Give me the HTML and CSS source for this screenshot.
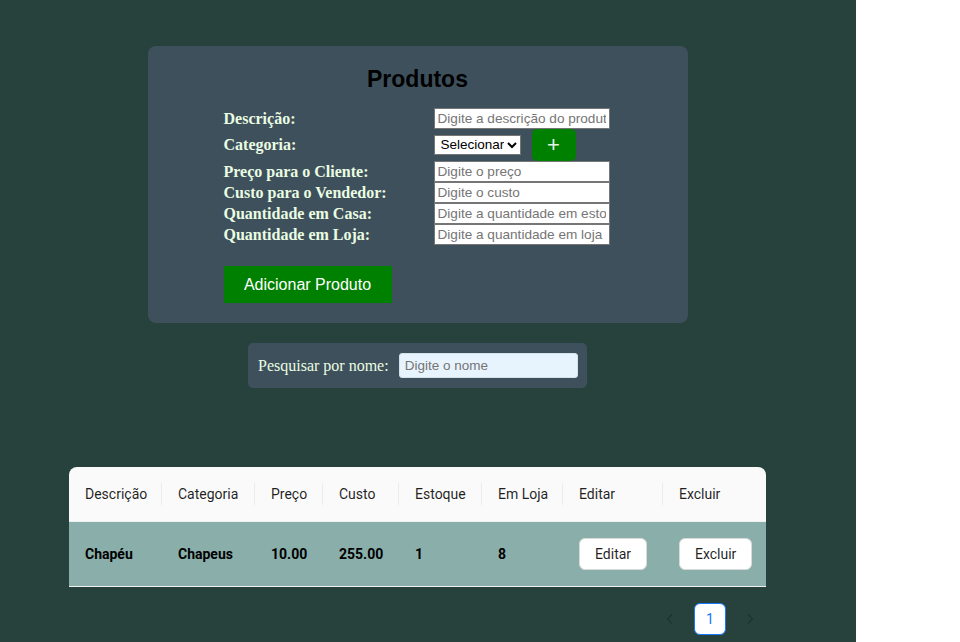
FILE: index.html
```html
<!DOCTYPE html>
<html lang="pt">
<head>
<meta charset="utf-8">
<title>Produtos</title>
<link rel="stylesheet" href="styles.css">
</head>
<body>
<div class="app">
  <div class="column">
    <section class="card">
      <h2 class="title">Produtos</h2>
      <div class="form">
        <label class="lbl">Descrição:</label>
        <div class="field"><input class="inp" type="text" placeholder="Digite a descrição do produto"></div>
        <label class="lbl">Categoria:</label>
        <div class="field field-cat">
          <select class="sel"><option>Selecionar</option></select>
          <button class="plus" type="button">+</button>
        </div>
        <label class="lbl">Preço para o Cliente:</label>
        <div class="field"><input class="inp" type="text" placeholder="Digite o preço"></div>
        <label class="lbl">Custo para o Vendedor:</label>
        <div class="field"><input class="inp" type="text" placeholder="Digite o custo"></div>
        <label class="lbl">Quantidade em Casa:</label>
        <div class="field"><input class="inp" type="text" placeholder="Digite a quantidade em estoque"></div>
        <label class="lbl">Quantidade em Loja:</label>
        <div class="field"><input class="inp" type="text" placeholder="Digite a quantidade em loja"></div>
      </div>
      <div class="actions">
        <button class="add" type="button">Adicionar Produto</button>
      </div>
    </section>

    <div class="search">
      <label class="search-lbl">Pesquisar por nome:</label>
      <input class="search-inp" type="text" placeholder="Digite o nome">
    </div>

    <div class="table-wrap">
      <table class="tbl">
        <colgroup>
          <col class="c1"><col class="c2"><col class="c3"><col class="c4">
          <col class="c5"><col class="c6"><col class="c7"><col class="c8">
        </colgroup>
        <thead>
          <tr>
            <th>Descrição</th>
            <th class="sep">Categoria</th>
            <th class="sep">Preço</th>
            <th class="sep">Custo</th>
            <th class="sep">Estoque</th>
            <th class="sep">Em Loja</th>
            <th class="sep">Editar</th>
            <th class="sep">Excluir</th>
          </tr>
        </thead>
        <tbody>
          <tr>
            <td>Chapéu</td>
            <td>Chapeus</td>
            <td>10.00</td>
            <td>255.00</td>
            <td>1</td>
            <td>8</td>
            <td><button class="btn" type="button">Editar</button></td>
            <td><button class="btn" type="button">Excluir</button></td>
          </tr>
        </tbody>
      </table>
      <div class="pager">
        <span class="pg-arrow">
          <svg width="12" height="12" viewBox="0 0 12 12"><path d="M8 1.5 3.5 6 8 10.5" fill="none" stroke="currentColor" stroke-width="1.2"/></svg>
        </span>
        <span class="pg-item">1</span>
        <span class="pg-arrow">
          <svg width="12" height="12" viewBox="0 0 12 12"><path d="M4 1.5 8.5 6 4 10.5" fill="none" stroke="currentColor" stroke-width="1.2"/></svg>
        </span>
      </div>
    </div>
  </div>
</div>
</body>
</html>
```

FILE: styles.css
```css
html, body {
  margin: 0;
  padding: 0;
  background: #ffffff;
}

.app {
  width: 856px;
  min-height: 642px;
  background: #27423c;
  overflow: hidden;
}

.column {
  width: 835px;
  display: flex;
  flex-direction: column;
  align-items: center;
  padding-top: 46px;
}

.card {
  width: 540px;
  box-sizing: border-box;
  background: #3e505c;
  border-radius: 8px;
  padding: 19px 0 20px;
  display: flex;
  flex-direction: column;
  align-items: center;
}

.title {
  margin: 0 0 15px;
  font-family: "Liberation Sans", Arial, sans-serif;
  font-size: 23px;
  line-height: 28px;
  font-weight: bold;
  color: #000;
}

.form {
  display: grid;
  grid-template-columns: 210px 178px;
  align-items: center;
}

.lbl {
  font-family: "Liberation Serif", "Times New Roman", serif;
  font-weight: bold;
  font-size: 16px;
  color: #eafde2;
  line-height: 18px;
}

.field {
  display: flex;
  align-items: center;
}

.field-cat {
  gap: 11px;
}

.inp {
  box-sizing: border-box;
  width: 176px;
  height: 21px;
  margin: 0;
  padding: 1px 3px;
  border: 1px solid #767676;
  background: #fff;
  font-family: "Liberation Sans", Arial, sans-serif;
  font-size: 13.6px;
  color: #000;
}

.inp::placeholder {
  color: #757575;
}

.sel {
  box-sizing: border-box;
  width: 87px;
  height: 20px;
  margin: 0 0 1px;
  padding: 0 0 0 2px;
  border: 1px solid #767676;
  border-radius: 0;
  background: #fff;
  font-family: "Liberation Sans", Arial, sans-serif;
  font-size: 13.5px;
  color: #000;
}

.plus {
  width: 44px;
  height: 32px;
  border: 0;
  border-radius: 5px;
  background: #008000;
  color: #e3f3e3;
  font-family: "Liberation Sans", Arial, sans-serif;
  font-size: 22px;
  font-weight: 300;
  line-height: 32px;
  padding: 0 0 2px;
}

.actions {
  width: 388px;
  margin-top: 21px;
  display: flex;
}

.add {
  width: 168px;
  height: 37px;
  border: 0;
  background: #008000;
  color: #fff;
  font-family: "Liberation Sans", Arial, sans-serif;
  font-size: 16px;
  padding: 0;
}

.search {
  margin-top: 20px;
  width: 339px;
  height: 45px;
  box-sizing: border-box;
  background: #3e505c;
  border-radius: 5px;
  padding: 10px;
  display: flex;
  align-items: center;
  gap: 10px;
}

.search-lbl {
  font-family: "Liberation Serif", "Times New Roman", serif;
  font-size: 16px;
  color: #eafde2;
  white-space: nowrap;
}

.search-inp {
  box-sizing: border-box;
  width: 179px;
  height: 25px;
  border: 1px solid #d6e2ea;
  border-radius: 3px;
  background: #e8f4fd;
  padding: 0 5px;
  font-family: "Liberation Sans", Arial, sans-serif;
  font-size: 13.5px;
}

.search-inp::placeholder {
  color: #757575;
}

.table-wrap {
  margin-top: 79px;
  width: 697px;
}

.tbl {
  width: 697px;
  table-layout: fixed;
  border-collapse: separate;
  border-spacing: 0;
  font-family: Roboto, "Noto Sans", sans-serif;
  font-size: 14px;
}

.c1 { width: 93px; }
.c2 { width: 93px; }
.c3 { width: 68px; }
.c4 { width: 76px; }
.c5 { width: 83px; }
.c6 { width: 81px; }
.c7 { width: 100px; }
.c8 { width: 103px; }

.tbl th {
  position: relative;
  height: 55px;
  box-sizing: border-box;
  padding: 0 16px;
  background: #fafafa;
  color: rgba(0, 0, 0, 0.88);
  font-weight: normal;
  text-align: left;
  white-space: nowrap;
  border-bottom: 1px solid #f0f0f0;
}

.tbl th:first-child {
  border-top-left-radius: 8px;
}

.tbl th:last-child {
  border-top-right-radius: 8px;
}

.tbl th.sep::before {
  content: "";
  position: absolute;
  left: -1px;
  top: 50%;
  width: 1px;
  height: 22px;
  transform: translateY(-50%);
  background: #ececec;
}

.tbl td {
  height: 65px;
  box-sizing: border-box;
  padding: 0 16px;
  background: #8aafaa;
  color: #000;
  font-weight: bold;
  white-space: nowrap;
  border-bottom: 1px solid #f0f0f0;
}

.btn {
  height: 32px;
  padding: 0 15px;
  border: 1px solid #d9d9d9;
  border-radius: 6px;
  background: #fff;
  color: rgba(0, 0, 0, 0.88);
  font-family: Roboto, "Noto Sans", sans-serif;
  font-size: 14px;
  font-weight: normal;
}

.pager {
  margin-top: 16px;
  display: flex;
  justify-content: flex-end;
  gap: 8px;
}

.pg-arrow {
  width: 32px;
  height: 32px;
  display: flex;
  align-items: center;
  justify-content: center;
  color: rgba(0, 0, 0, 0.25);
}

.pg-item {
  width: 32px;
  height: 32px;
  box-sizing: border-box;
  border: 1px solid #1677ff;
  border-radius: 6px;
  background: #fff;
  color: #1677ff;
  display: flex;
  align-items: center;
  justify-content: center;
  font-family: Roboto, "Noto Sans", sans-serif;
  font-size: 14px;
}
```
